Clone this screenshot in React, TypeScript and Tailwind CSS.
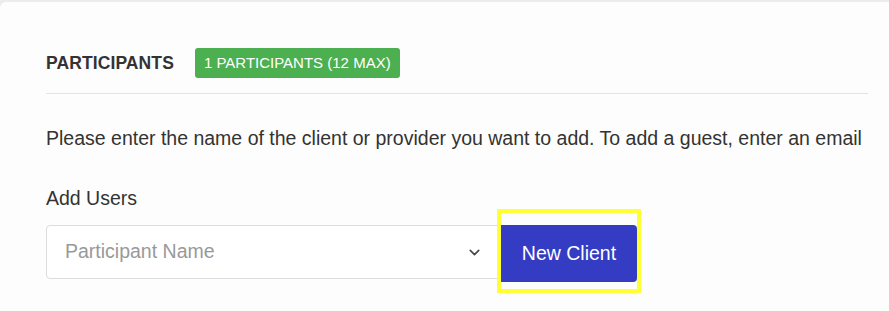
import { ChevronDown } from "lucide-react";

const App = () => {
  return (
    <div className="w-[889px] h-[311px] bg-[#ececec] pt-[2px] overflow-hidden font-['Liberation_Sans',Arial,sans-serif]">
      <div className="h-full bg-[#fdfdfd] rounded-tl-md pt-[46px] pl-[46px] pr-[21px]">
        <div className="flex items-center h-[30px]">
          <h2 className="text-[17.5px] font-bold text-[#333] tracking-[0.1px]">PARTICIPANTS</h2>
          <span className="ml-[21px] h-[30px] px-[9px] flex items-center rounded-[3px] bg-[#4caf50] text-white text-[15px]">
            1 PARTICIPANTS (12 MAX)
          </span>
        </div>
        <hr className="mt-[15px] border-0 h-px bg-[#e3e3e3]" />

        <p className="mt-[30px] text-[19.5px] leading-[28px] text-[#333] whitespace-nowrap">
          Please enter the name of the client or provider you want to add. To add a guest, enter an email
        </p>

        <p className="mt-[32px] text-[19.5px] leading-[28px] text-[#333]">Add Users</p>

        <div className="mt-[13px] flex items-start">
          <div className="w-[455px] h-[54px] border border-[#dcdcdc] rounded-l-[4px] bg-white flex items-center justify-between pl-[18px] pr-[17px]">
            <span className="text-[19.5px] text-[#999]">Participant Name</span>
            <ChevronDown className="size-[17px] text-[#444]" strokeWidth={2.2} />
          </div>
          <div className="relative">
            <button className="w-[136px] h-[57px] bg-[#343cc4] text-white text-[19.5px] rounded-r-[4px]">
              New Client
            </button>
            <span className="absolute -left-1 -top-4 -right-1 -bottom-[11px] border-4 border-[#ffff33] pointer-events-none" />
          </div>
        </div>
      </div>
    </div>
  );
};

export default App;
